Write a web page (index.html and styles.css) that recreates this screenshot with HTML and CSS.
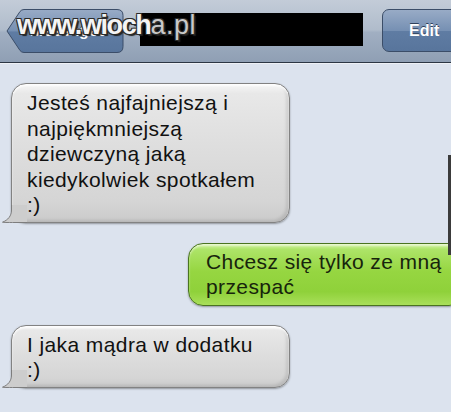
FILE: index.html
```html
<!DOCTYPE html>
<html lang="pl">
<head>
<meta charset="utf-8">
<title>Messages</title>
<link rel="stylesheet" href="styles.css">
</head>
<body>
<div class="screen">
  <header class="navbar">
    <div class="back">
      <svg class="back-shape" width="118" height="44" viewBox="0 0 118 44">
        <defs>
          <linearGradient id="bg" x1="0" y1="0" x2="0" y2="1">
            <stop offset="0" stop-color="#98abc6"/>
            <stop offset="0.5" stop-color="#7690b3"/>
            <stop offset="0.52" stop-color="#5f7ca3"/>
            <stop offset="1" stop-color="#58759c"/>
          </linearGradient>
        </defs>
        <path d="M1 22 L14 2.5 Q15.5 0.5 18 0.5 H111 Q117 0.5 117 6.5 V37.5 Q117 43.5 111 43.5 H18 Q15.5 43.5 14 41.5 Z" fill="url(#bg)" stroke="#3b4d68" stroke-width="1"/>
      </svg>
      <span class="back-label">Messages</span>
    </div>
    <div class="redact"></div>
    <div class="edit">Edit</div>
  </header>

  <main class="thread">
    <div class="bubble in">
      Jesteś najfajniejszą i<br>najpiękmniejszą<br>dziewczyną jaką<br>kiedykolwiek spotkałem<br>:)
      <svg class="tail" width="26" height="18" viewBox="0 0 26 18">
        <path d="M10.5 0 V5 C10.5 11 7 15 1.5 17.2 C6 17.8 11 17.5 14 17.5 H26 V0 Z" fill="#cdcdcd"/>
        <path d="M10.5 0 V5 C10.5 11 7 15 1.5 17.2 C6 17.8 11 17.5 14 17.5 H26" fill="none" stroke="#7d7d7d" stroke-width="1"/>
      </svg>
    </div>
    <div class="bubble out">
      Chcesz się tylko ze mną<br>przespać
    </div>
    <div class="bubble in">
      I jaka mądra w dodatku<br>:)
      <svg class="tail" width="26" height="18" viewBox="0 0 26 18">
        <path d="M10.5 0 V5 C10.5 11 7 15 1.5 17.2 C6 17.8 11 17.5 14 17.5 H26 V0 Z" fill="#cdcdcd"/>
        <path d="M10.5 0 V5 C10.5 11 7 15 1.5 17.2 C6 17.8 11 17.5 14 17.5 H26" fill="none" stroke="#7d7d7d" stroke-width="1"/>
      </svg>
    </div>
  </main>

  <div class="watermark">www.wioch<span class="wm-dim">a.pl</span></div>
  <div class="edge-strip"></div>
</div>
</body>
</html>
```

FILE: styles.css
```css
html, body {
  margin: 0;
  padding: 0;
}

body {
  width: 451px;
  height: 412px;
  overflow: hidden;
  background: #dce3ee;
  font-family: "Liberation Sans", Arial, sans-serif;
}

.screen {
  position: relative;
  width: 451px;
  height: 412px;
  overflow: hidden;
  background: #dce3ee;
}

/* ---------- navigation bar ---------- */
.navbar {
  height: 63px;
  box-sizing: border-box;
  display: flex;
  align-items: flex-start;
  padding: 9px 0 0 6px;
  background: linear-gradient(to bottom, #c3ccd8 0%, #b0bccb 48%, #a1afc2 52%, #8f9fb4 100%);
  border-bottom: 1px solid #2c3644;
  box-shadow: 0 1px 0 #eef1f6;
  overflow: hidden;
}

.back {
  position: relative;
  width: 118px;
  height: 44px;
  flex: none;
}

.back-shape {
  display: block;
}

.back-label {
  position: absolute;
  left: 24px;
  top: 13px;
  color: #fff;
  font-weight: bold;
  font-size: 16px;
  text-shadow: 0 -1px 0 #2f405a;
}

.redact {
  flex: none;
  width: 223px;
  height: 33px;
  margin: 4px 0 0 16px;
  background: #000;
}

.edit {
  flex: none;
  width: 80px;
  height: 43px;
  box-sizing: border-box;
  margin-left: 19px;
  padding: 11px 0 0 26px;
  border: 1px solid #3b4d68;
  border-radius: 7px;
  background: linear-gradient(to bottom, #98abc6 0%, #7690b3 50%, #5f7ca3 52%, #58759c 100%);
  color: #fff;
  font-weight: bold;
  font-size: 16px;
  line-height: 20px;
  text-shadow: 0 -1px 0 #2f405a;
}

/* ---------- message thread ---------- */
.thread {
  display: flex;
  flex-direction: column;
  align-items: flex-start;
  gap: 19px;
  padding: 20px 0 0 11px;
}

.bubble {
  position: relative;
  box-sizing: border-box;
  font-size: 21px;
  letter-spacing: 0.4px;
  line-height: 25.5px;
  white-space: nowrap;
  border-radius: 15px;
}

.bubble.in {
  width: 279px;
  padding: 6px 10px 4px 15px;
  color: #111;
  border: 1px solid #828282;
  background: linear-gradient(to bottom, #f7f7f7 0%, #e8e8e8 7%, #dedede 45%, #d5d5d5 85%, #cbcbcb 100%);
  box-shadow: 0 1px 2px rgba(0, 0, 0, 0.35), inset 0 2px 2px rgba(255, 255, 255, 0.85), inset -3px -2px 3px rgba(0, 0, 0, 0.1);
}

.bubble.in:first-child {
  margin-bottom: 1px;
}

.bubble.out {
  align-self: flex-end;
  width: 276px;
  margin-right: -13px;
  padding: 5px 0 5px 17px;
  color: #17240c;
  border: 1px solid #4a7420;
  background: linear-gradient(to bottom, #d2f2a2 0%, #ade468 9%, #96d641 45%, #8fd13a 78%, #a9df5a 100%);
  box-shadow: 0 1px 2px rgba(0, 0, 0, 0.35), inset 0 2px 2px rgba(255, 255, 255, 0.5);
}

.tail {
  position: absolute;
  left: -11px;
  bottom: -1px;
}

/* ---------- overlays ---------- */
.watermark {
  position: absolute;
  left: 17px;
  top: 10px;
  font-family: "Liberation Sans", Arial, sans-serif;
  font-weight: bold;
  font-size: 27px;
  letter-spacing: -1.4px;
  color: #f4f4f4;
  text-shadow: 1px 1px 0 #2b2b2b, -1px -1px 0 #2b2b2b, 1px -1px 0 #2b2b2b, -1px 1px 0 #2b2b2b, 2px 2px 1px #222;
}

.wm-dim {
  color: #c9c9c9;
  font-weight: normal;
  letter-spacing: 0.5px;
}

.edge-strip {
  position: absolute;
  left: 448px;
  top: 155px;
  width: 3px;
  height: 100px;
  background: #3b3b3b;
}
```
